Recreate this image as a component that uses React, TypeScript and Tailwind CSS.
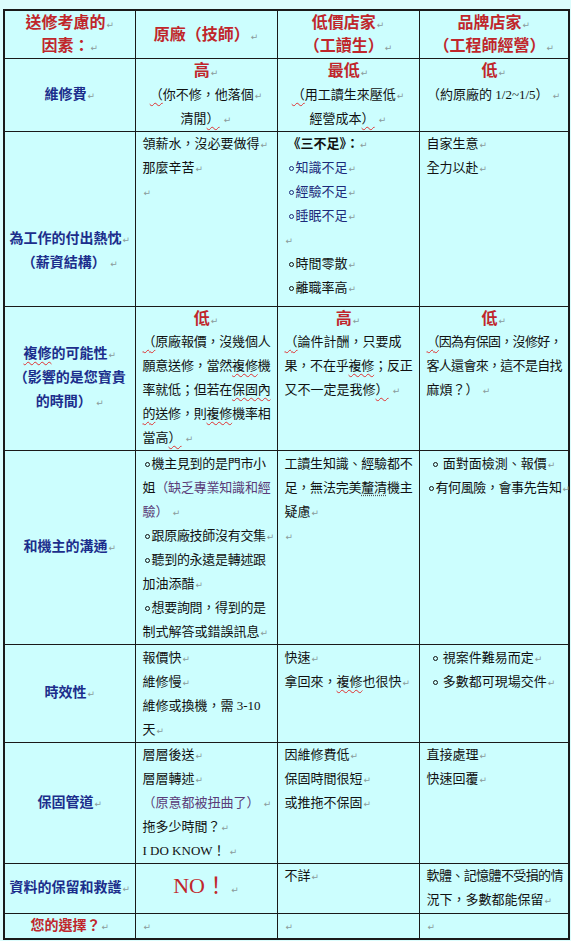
import type { ReactNode } from "react";

const Mark = () => (
  <span className="ml-px font-['DejaVu_Sans'] text-[9px] leading-none font-normal text-[#8a9a9a]">↵</span>
);

const L = ({ children, className = "" }: { children?: ReactNode; className?: string }) => (
  <div className={`whitespace-nowrap ${className}`}>
    {children}
  </div>
);

const Wavy = ({ children }: { children: ReactNode }) => (
  <span className="underline decoration-wavy decoration-[#e03030] decoration-1 underline-offset-[3px]">
    {children}
  </span>
);

// hollow bullet like Word's ◦
const Dot = () => (
  <span className="mx-[2px] inline-block h-[5px] w-[5px] rounded-full border border-current align-middle" />
);

const Head = ({ lines }: { lines: string[] }) => (
  <td className="border border-[#1a1a1a] bg-[#ccfefe] px-1 text-center align-middle text-[16px] font-bold leading-[23px] text-[#c0262b]">
    {lines.map((l) => (
      <L key={l}>
        {l}
        <Mark />
      </L>
    ))}
  </td>
);

const Label = ({ children, className = "" }: { children: ReactNode; className?: string }) => (
  <td
    className={`border border-[#1a1a1a] bg-[#ccfefe] px-1 text-center align-middle text-[14px] font-bold leading-[24px] text-[#1c2e8c] ${className}`}
  >
    {children}
  </td>
);

const Cell = ({
  children,
  className = "",
  mid = false,
}: {
  children?: ReactNode;
  className?: string;
  mid?: boolean;
}) => (
  <td
    className={`border border-[#1a1a1a] bg-[#ccfefe] px-[7px] ${mid ? "align-middle" : "align-top"} text-[13px] leading-[24px] text-[#111] ${className}`}
  >
    {children}
  </td>
);

const Big = ({ children, className = "" }: { children: ReactNode; className?: string }) => (
  <L className={`text-center text-[16px] font-bold text-[#c0262b] ${className}`}>
    {children}
    <Mark />
  </L>
);

export default function App() {
  return (
    <div className="min-h-[941px] w-[571px] bg-[#dcfdfd] pl-[3px] pt-[9px] font-['Liberation_Serif','Noto_Sans_CJK_TC',serif]">
      <table className="w-[565px] table-fixed border-collapse border-2 border-[#1a1a1a]">
        <colgroup>
          <col className="w-[131px]" />
          <col className="w-[142px]" />
          <col className="w-[142px]" />
          <col className="w-[150px]" />
        </colgroup>
        <tbody>
          <tr className="h-[48px]">
            <Head lines={["送修考慮的", "因素："]} />
            <Head lines={["原廠（技師）"]} />
            <Head lines={["低價店家", "（工讀生）"]} />
            <Head lines={["品牌店家", "（工程師經營）"]} />
          </tr>

          <tr className="h-[73px]">
            <Label>
              維修費
              <Mark />
            </Label>
            <Cell className="text-center">
              <Big>高</Big>
              <L>
                <Wavy>（</Wavy>你不修，他落個
                <Mark />
              </L>
              <L>
                清閒<Wavy>）</Wavy> <Mark />
              </L>
            </Cell>
            <Cell className="text-center">
              <Big>最低</Big>
              <L>
                <Wavy>（</Wavy>用工讀生來壓低
                <Mark />
              </L>
              <L>
                經營成本<Wavy>）</Wavy> <Mark />
              </L>
            </Cell>
            <Cell className="text-center">
              <Big>低</Big>
              <L>
                （約原廠的 1/2~1/5） <Mark />
              </L>
            </Cell>
          </tr>

          <tr className="h-[175px]">
            <Label className="pt-[65px]">
              <L>
                為工作的付出熱忱
                <Mark />
              </L>
              <L>
                （薪資結構） <Mark />
              </L>
            </Label>
            <Cell>
              <L>
                領薪水，沒必要做得
                <Mark />
              </L>
              <L>
                那麼辛苦
                <Mark />
              </L>
              <L>
                <Mark />
              </L>
            </Cell>
            <Cell>
              <L className="pl-[3px]">
                <b>《三不足》：</b>
                <Mark />
              </L>
              <L className="pl-[2px] text-[#1c2a7a]">
                <Dot />知識不足
                <Mark />
              </L>
              <L className="pl-[2px] text-[#1c2a7a]">
                <Dot />經驗不足
                <Mark />
              </L>
              <L className="pl-[2px] text-[#1c2a7a]">
                <Dot />睡眠不足
                <Mark />
              </L>
              <L>
                <Mark />
              </L>
              <L className="pl-[2px]">
                <Dot />時間零散
                <Mark />
              </L>
              <L className="pl-[2px]">
                <Dot />離職率高
                <Mark />
              </L>
            </Cell>
            <Cell>
              <L>
                自家生意
                <Mark />
              </L>
              <L>
                全力以赴
                <Mark />
              </L>
            </Cell>
          </tr>

          <tr className="h-[143px]">
            <Label>
              <L>
                <Wavy>複修</Wavy>的可能性
                <Mark />
              </L>
              <L>（影響的是您寶貴</L>
              <L>
                的時間） <Mark />
              </L>
            </Label>
            <Cell>
              <Big className="leading-[23px]">低</Big>
              <L className="tracking-[-0.2px]">
                <Wavy>（</Wavy>原廠報價，沒幾個人
              </L>
              <L className="tracking-[-0.2px]">
                願意送修，當然<Wavy>複修</Wavy>機
              </L>
              <L className="tracking-[-0.2px]">
                率就低；但若在<Wavy>保固內</Wavy>
              </L>
              <L className="tracking-[-0.2px]">
                <Wavy>的</Wavy>送修，則<Wavy>複修</Wavy>機率相
              </L>
              <L>
                當高<Wavy>）</Wavy> <Mark />
              </L>
            </Cell>
            <Cell>
              <Big className="leading-[23px]">高</Big>
              <L>
                <Wavy>（</Wavy>論件計酬，只要成
              </L>
              <L className="tracking-[-0.2px]">
                果，不在乎<Wavy>複修</Wavy>；反正
              </L>
              <L>
                又不一定是我修<Wavy>）</Wavy> <Mark />
              </L>
            </Cell>
            <Cell>
              <Big className="leading-[23px]">低</Big>
              <L className="tracking-[-0.7px]">
                <Wavy>（</Wavy>因為有保固，沒修好，
              </L>
              <L className="tracking-[-0.7px]">客人還會來，這不是自找</L>
              <L>
                麻煩？） <Mark />
              </L>
            </Cell>
          </tr>

          <tr className="h-[193px]">
            <Label>
              和機主的溝通
              <Mark />
            </Label>
            <Cell className="pt-px">
              <L className="tracking-[-0.3px]">
                <Dot />機主見到的是門市小
              </L>
              <L className="tracking-[-0.2px]">
                姐<span className="text-[#5a3c78]">（缺乏專業知識和經</span>
              </L>
              <L>
                <span className="text-[#5a3c78]">驗）</span> <Mark />
              </L>
              <L className="tracking-[-0.3px]">
                <Dot />跟原廠技師沒有交集
                <Mark />
              </L>
              <L className="tracking-[-0.3px]">
                <Dot />聽到的永遠是轉述跟
              </L>
              <L>
                加油添醋
                <Mark />
              </L>
              <L className="tracking-[-0.3px]">
                <Dot />想要詢問，得到的是
              </L>
              <L>
                制式解答或錯誤訊息
                <Mark />
              </L>
            </Cell>
            <Cell className="pt-px">
              <L className="tracking-[-0.2px]">工讀生知識、經驗都不</L>
              <L className="tracking-[-0.2px]">
                足，無法完美
                <span className="underline decoration-dotted decoration-[#555] underline-offset-[3px]">釐清</span>
                機主
              </L>
              <L>
                疑慮
                <Mark />
              </L>
              <L>
                <Mark />
              </L>
            </Cell>
            <Cell className="pt-px">
              <L className="pl-[4px]">
                <Dot /> 面對面檢測、報價
                <Mark />
              </L>
              <L className="tracking-[-0.4px]">
                <Dot />有何風險，會事先告知
                <Mark />
              </L>
            </Cell>
          </tr>

          <tr className="h-[98px]">
            <Label>
              時效性
              <Mark />
            </Label>
            <Cell className="pt-px">
              <L>
                報價快
                <Mark />
              </L>
              <L>
                維修慢
                <Mark />
              </L>
              <L>維修或換機，需 3-10</L>
              <L>
                天<Mark />
              </L>
            </Cell>
            <Cell className="pt-px">
              <L>
                快速
                <Mark />
              </L>
              <L>
                拿回來，<Wavy>複修</Wavy>也很快
                <Mark />
              </L>
            </Cell>
            <Cell className="pt-px">
              <L className="pl-[4px]">
                <Dot /> 視案件難易而定
                <Mark />
              </L>
              <L className="pl-[4px]">
                <Dot /> 多數都可現場交件
                <Mark />
              </L>
            </Cell>
          </tr>

          <tr className="h-[121px]">
            <Label>
              保固管道
              <Mark />
            </Label>
            <Cell>
              <L>
                層層後送
                <Mark />
              </L>
              <L>
                層層轉述
                <Mark />
              </L>
              <L className="text-[#5a3c78]">
                （原意都被扭曲了） <Mark />
              </L>
              <L>
                拖多少時間？
                <Mark />
              </L>
              <L>
                I DO KNOW！ <Mark />
              </L>
            </Cell>
            <Cell>
              <L>
                因維修費低
                <Mark />
              </L>
              <L>
                保固時間很短
                <Mark />
              </L>
              <L>
                或推拖不保固
                <Mark />
              </L>
            </Cell>
            <Cell>
              <L>
                直接處理
                <Mark />
              </L>
              <L>
                快速回覆
                <Mark />
              </L>
            </Cell>
          </tr>

          <tr className="h-[50px]">
            <Label>
              資料的保留和救護
              <Mark />
            </Label>
            <Cell mid className="text-center">
              <span className="text-[22px] leading-none text-[#c0262b]">NO！</span> <Mark />
            </Cell>
            <Cell className="leading-[20px]">
              <L>
                不詳
                <Mark />
              </L>
            </Cell>
            <Cell>
              <L className="tracking-[-0.6px]">軟體、記憶體不受損的情</L>
              <L>
                況下，多數都能保留
                <Mark />
              </L>
            </Cell>
          </tr>

          <tr className="h-[25px]">
            <Label className="text-[#c0262b]">
              您的選擇？
              <Mark />
            </Label>
            <Cell>
              <Mark />
            </Cell>
            <Cell>
              <Mark />
            </Cell>
            <Cell>
              <Mark />
            </Cell>
          </tr>
        </tbody>
      </table>
    </div>
  );
}
